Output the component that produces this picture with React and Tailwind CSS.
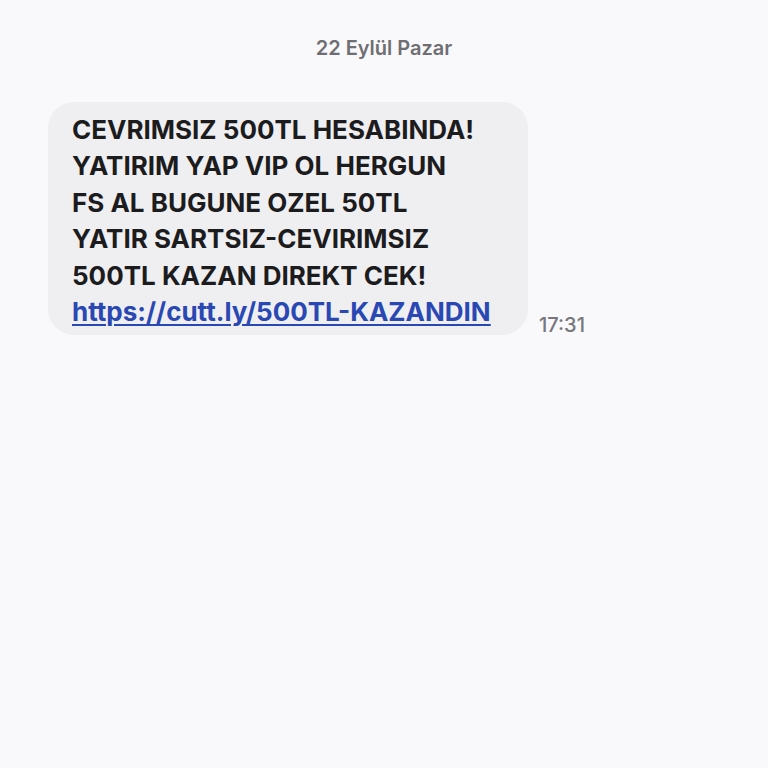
export default function App() {
  return (
    <div
      className="min-h-[768px] w-[768px] bg-[#f9f9fb] pt-[35px]"
      style={{ fontFamily: 'Inter, "Liberation Sans", sans-serif' }}
    >
      <div className="text-center text-[20px] font-semibold leading-[26px] text-[#6e6e73]">
        22 Eylül Pazar
      </div>
      <div className="mt-[41px] flex items-end pl-[48px]">
        <div className="w-[480px] rounded-[26px] bg-[#efeff1] pb-[5px] pl-[24px] pr-[20px] pt-[10px] text-[26px] font-bold leading-[36.4px] text-[#1c1c1e]">
          <div>CEVRIMSIZ 500TL HESABINDA!</div>
          <div>YATIRIM YAP VIP OL HERGUN</div>
          <div>FS AL BUGUNE OZEL 50TL</div>
          <div>YATIR SARTSIZ-CEVIRIMSIZ</div>
          <div>500TL KAZAN DIREKT CEK!</div>
          <div>
            <a href="#" className="text-[#2a48b3] underline decoration-2 underline-offset-[3px]">
              https://cutt.ly/500TL-KAZANDIN
            </a>
          </div>
        </div>
        <div className="-mb-[2px] ml-[11px] text-[20px] font-medium leading-[24px] text-[#77777c]">17:31</div>
      </div>
    </div>
  );
}
